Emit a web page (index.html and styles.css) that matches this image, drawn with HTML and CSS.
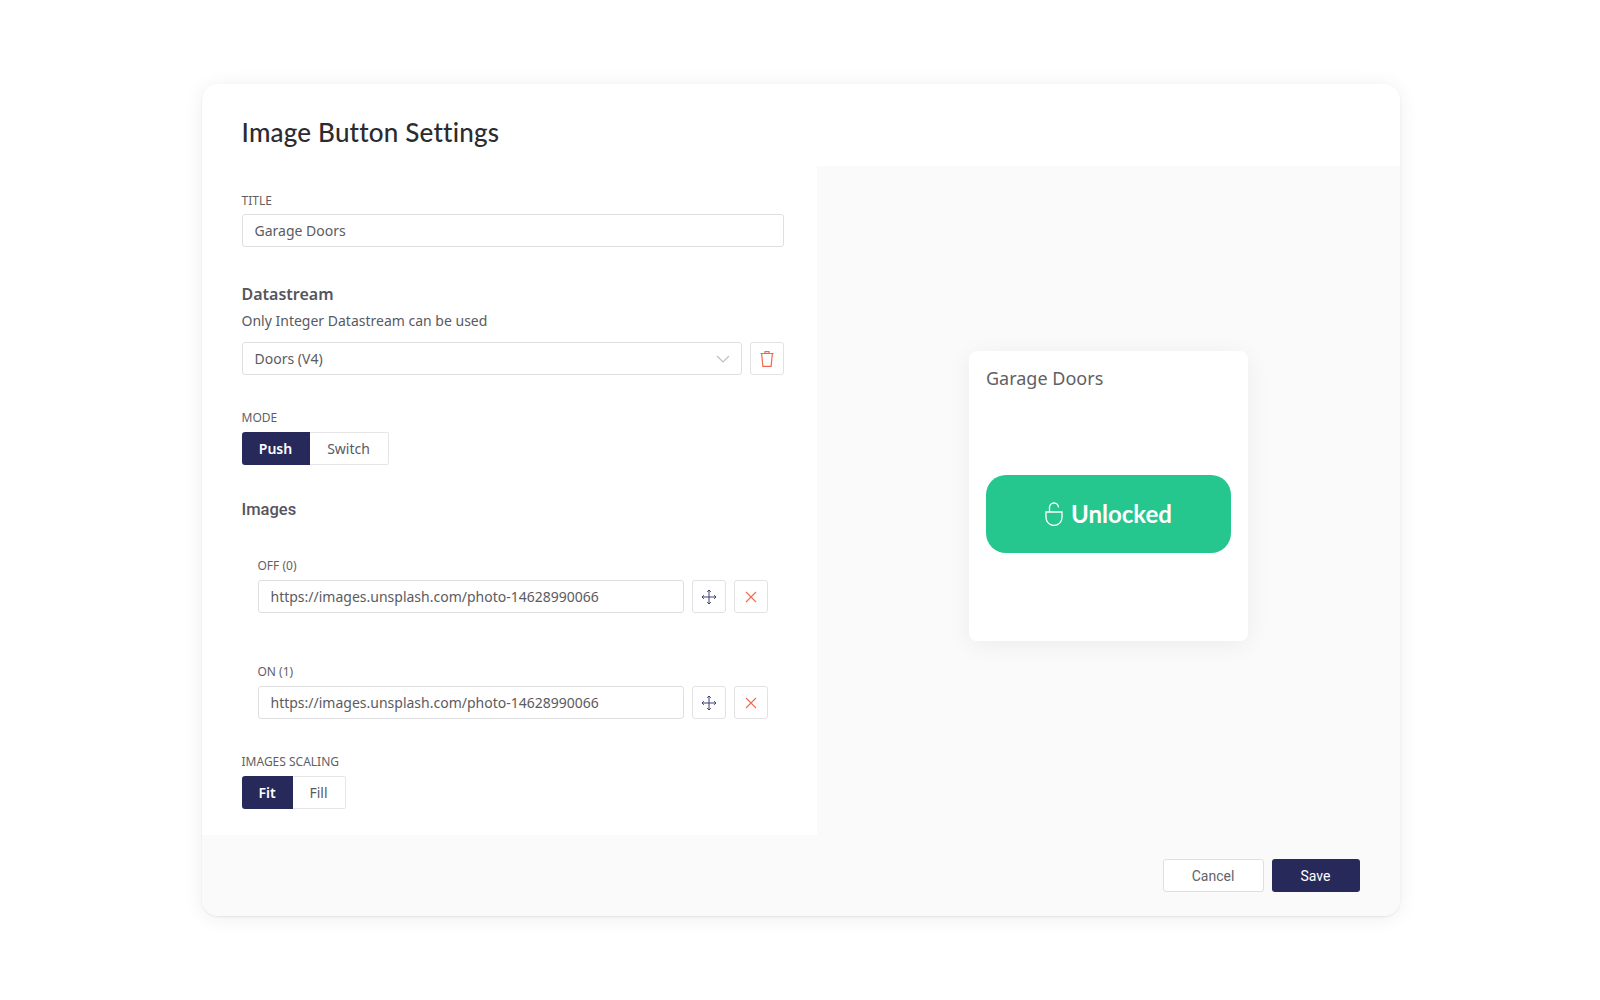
FILE: index.html
```html
<!DOCTYPE html>
<html lang="en">
<head>
<meta charset="utf-8">
<title>Image Button Settings</title>
<link rel="stylesheet" href="styles.css">
</head>
<body>
<main class="modal">
  <header class="modal-header"><h1>Image Button Settings</h1></header>
  <div class="modal-body">
    <form class="form">
      <div class="field">
        <label class="label">TITLE</label>
        <div class="input">Garage Doors</div>
      </div>
      <section class="field datastream">
        <h2 class="heading">Datastream</h2>
        <p class="hint">Only Integer Datastream can be used</p>
        <div class="row">
          <div class="input grow select">Doors (V4)
            <svg class="chevron" width="14" height="8" viewBox="0 0 14 8"><path d="M1 1l6 6 6-6" fill="none" stroke="#bdbdc0" stroke-width="1.1"/></svg>
          </div>
          <button type="button" class="icon-btn">
            <svg width="16" height="18" viewBox="0 0 16 18" fill="none" stroke="#f0694a" stroke-width="1.2"><path d="M1.5 3.5h13M6 3.5V1.6h4v1.9M2.6 3.5l1.3 12.9h8.2l1.3-12.9"/></svg>
          </button>
        </div>
      </section>
      <div class="field mode">
        <label class="label">MODE</label>
        <div class="segment"><span class="seg on push">Push</span><span class="seg switch">Switch</span></div>
      </div>
      <h2 class="heading images">Images</h2>
      <div class="image-row off">
        <label class="label">OFF (0)</label>
        <div class="row">
          <div class="input grow">https://images.unsplash.com/photo-14628990066</div>
          <button type="button" class="icon-btn"><svg width="16" height="16" viewBox="0 0 16 16" fill="none" stroke="#3d3f74" stroke-width="1"><path d="M8 1v14M1 8h14M6.2 2.8L8 1l1.800 1.800M6.200 13.200L8 15l1.800-1.800M2.800 6.200L1 8l1.800 1.800M13.200 6.200L15 8l-1.800 1.800"/></svg></button>
          <button type="button" class="icon-btn"><svg width="12" height="12" viewBox="0 0 12 12" fill="none" stroke="#f0694a" stroke-width="1.1"><path d="M1 1l10 10M11 1L1 11"/></svg></button>
        </div>
      </div>
      <div class="image-row on-row">
        <label class="label">ON (1)</label>
        <div class="row">
          <div class="input grow">https://images.unsplash.com/photo-14628990066</div>
          <button type="button" class="icon-btn"><svg width="16" height="16" viewBox="0 0 16 16" fill="none" stroke="#3d3f74" stroke-width="1"><path d="M8 1v14M1 8h14M6.2 2.8L8 1l1.800 1.800M6.200 13.200L8 15l1.800-1.800M2.800 6.200L1 8l1.800 1.800M13.200 6.200L15 8l-1.800 1.800"/></svg></button>
          <button type="button" class="icon-btn"><svg width="12" height="12" viewBox="0 0 12 12" fill="none" stroke="#f0694a" stroke-width="1.1"><path d="M1 1l10 10M11 1L1 11"/></svg></button>
        </div>
      </div>
      <div class="field scaling">
        <label class="label">IMAGES SCALING</label>
        <div class="segment"><span class="seg on fit">Fit</span><span class="seg fill">Fill</span></div>
      </div>
    </form>
    <aside class="preview">
      <div class="card">
        <div class="card-title">Garage Doors</div>
        <div class="status">
          <svg width="18" height="24" viewBox="0 0 18 24" fill="none" stroke="#fff" stroke-width="1.3"><path d="M1 10h16v5.500a8 8 0 0 1-16 0zM4.500 10V5.500a4.500 4.500 0 0 1 9 0"/></svg>
          <span>Unlocked</span>
        </div>
      </div>
    </aside>
  </div>
  <footer class="modal-footer">
    <button type="button" class="btn cancel">Cancel</button>
    <button type="button" class="btn save">Save</button>
  </footer>
</main>
</body>
</html>
```
FILE: styles.css
```css
* { box-sizing: border-box; }
html, body { margin: 0; height: 100%; background: #fff; }
body {
  display: flex;
  align-items: center;
  justify-content: center;
  font-family: "Noto Sans", sans-serif;
  color: #59595f;
  padding-left: 1px;
}
.modal {
  width: 1198px;
  height: 832px;
  background: #fff;
  border-radius: 16px;
  overflow: hidden;
  display: flex;
  flex-direction: column;
  box-shadow: 0 1px 2px rgba(0,0,0,.08), 0 2px 20px rgba(0,0,0,.07);
}
.modal-header { height: 82px; padding: 32px 40px 0; flex: none; }
h1 { margin: 0; font: 500 26px/32px Lato, sans-serif; color: #2b2c30; letter-spacing: .2px; }
.modal-body { flex: 1; display: flex; min-height: 0; }
.form { width: 615px; flex: none; padding: 27px 33px 0 40px; display: flex; flex-direction: column; }
.label { display: block; font-size: 12px; line-height: 16px; margin-bottom: 5px; color: #5f5f65; }
.input {
  height: 33px;
  border: 1px solid #dfdfe1;
  border-radius: 3px;
  background: #fff;
  padding: 0 12px;
  display: flex;
  align-items: center;
  font-size: 14px;
  color: #5b5b61;
}
.grow { flex: 1; min-width: 0; }
.select { justify-content: space-between; padding-right: 11px; }
.row { display: flex; gap: 8px; }
.heading { margin: 0; font: 600 16px/20px "Noto Sans", sans-serif; color: #55555b; }
.datastream { margin-top: 37px; }
.hint { margin: 7px 0 11px; font-size: 14px; line-height: 20px; }
.mode { margin-top: 35px; }
.mode .label, .scaling .label { margin-bottom: 6px; }
.segment { display: flex; height: 33px; }
.seg {
  display: flex;
  align-items: center;
  justify-content: center;
  font-size: 14px;
  border: 1px solid #e6e6e8;
  border-left: 0;
  border-radius: 0 2px 2px 0;
  background: #fff;
}
.seg.on {
  background: #27295b;
  border: 0;
  border-radius: 3px 0 0 3px;
  color: #fff;
  font-weight: 600;
}
.push { width: 68px; }
.switch { width: 79px; }
.fit { width: 51px; }
.fill { width: 53px; }
.images { margin-top: 35px; font-family: Roboto, sans-serif; font-weight: 500; font-size: 16.500px; }
.image-row { padding: 0 16px; }
.image-row .label { margin-bottom: 6px; }
.off { margin-top: 38px; }
.on-row { margin-top: 51px; }
.scaling { margin-top: 35px; }
.icon-btn {
  width: 34px;
  height: 33px;
  flex: none;
  padding: 0;
  display: flex;
  align-items: center;
  justify-content: center;
  background: #fff;
  border: 1px solid #e2e2e4;
  border-radius: 3px;
}
.preview { flex: 1; background: #fafafa; display: flex; align-items: center; justify-content: center; padding-bottom: 9px; padding-left: 1px; }
.card {
  width: 279px;
  height: 290px;
  background: #fff;
  border-radius: 8px;
  padding: 14px 17px 0;
  box-shadow: 0 4px 24px rgba(0,0,0,.06);
}
.card-title { font-size: 18px; line-height: 26px; color: #5f5f65; }
.status {
  margin-top: 84px;
  height: 78px;
  background: #26c68f;
  border-radius: 20px;
  display: flex;
  align-items: center;
  justify-content: center;
  gap: 8px;
  color: #fff;
  font: 700 24px/30px Lato, sans-serif;
}
.modal-footer {
  height: 81px;
  flex: none;
  background: #fafafa;
  display: flex;
  justify-content: flex-end;
  gap: 8px;
  padding: 24px 40px 0 0;
}
.btn { height: 33px; font: 400 14px Roboto, sans-serif; border-radius: 3px; padding: 0; }
.cancel { width: 101px; background: #fff; border: 1px solid #dfdfe1; color: #626268; }
.save { width: 88px; background: #27295b; border: 0; color: #fff; }
```
